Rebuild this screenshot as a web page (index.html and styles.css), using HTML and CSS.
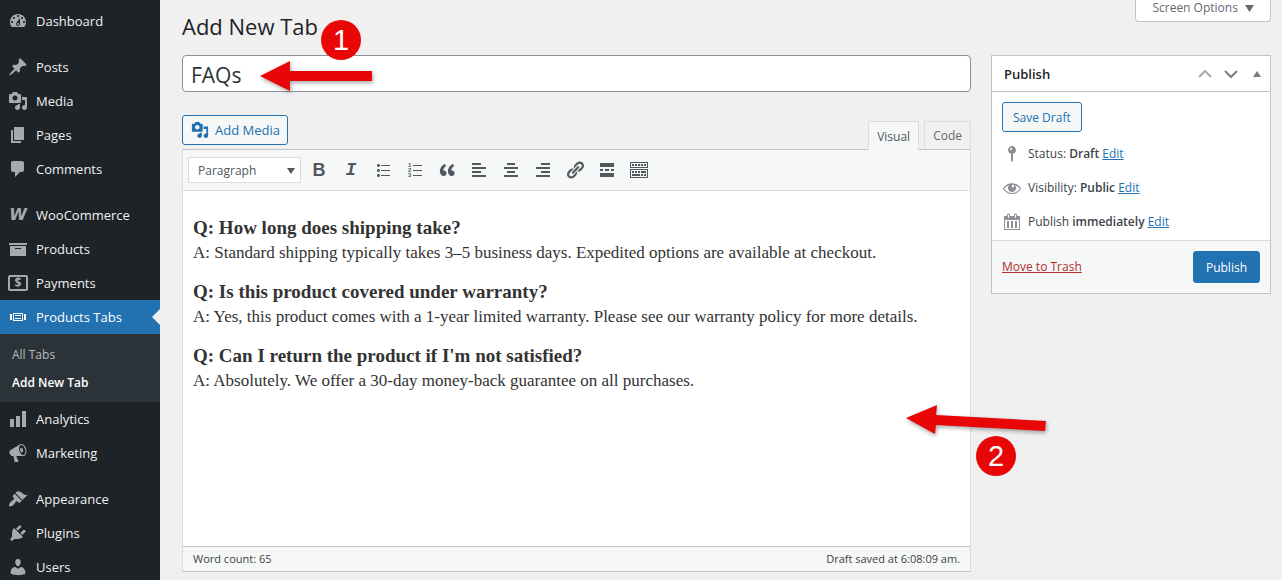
FILE: index.html
```html
<!DOCTYPE html>
<html lang="en">
<head>
  <meta charset="UTF-8">
  <title>Add New Tab</title>
  <link rel="stylesheet" href="styles.css">
</head>
<body>
  <div class="layout">
    <nav class="sidebar">
      <ul class="menu">
        <li><a href="#"><svg class="icon" viewBox="0 0 20 20"><path d="M3.76 16h12.48c1.1-1.37 1.76-3.11 1.76-5 0-4.42-3.58-8-8-8s-8 3.58-8 8c0 1.89.66 3.63 1.76 5zM10 4c.55 0 1 .45 1 1s-.45 1-1 1-1-.45-1-1 .45-1 1-1zM6 6c.55 0 1 .45 1 1s-.45 1-1 1-1-.45-1-1 .45-1 1-1zm8 0c.55 0 1 .45 1 1s-.45 1-1 1-1-.45-1-1 .45-1 1-1zm-5.37 5.55L12 7v6c0 1.1-.9 2-2 2s-2-.9-2-2c0-.57.24-1.08.63-1.45zM4 10c.55 0 1 .45 1 1s-.45 1-1 1-1-.45-1-1 .45-1 1-1zm12 0c.55 0 1 .45 1 1s-.45 1-1 1-1-.45-1-1 .45-1 1-1zm-5 3c0-.55-.45-1-1-1s-1 .45-1 1 .45 1 1 1 1-.45 1-1z"/></svg>Dashboard</a></li>
        <li class="separator"></li>
        <li><a href="#"><svg class="icon" viewBox="0 0 20 20"><path d="M10.44 3.02l1.82-1.82 6.36 6.35-1.83 1.82c-1.05-.68-2.48-.57-3.41.36l-.75.75c-.92.93-1.04 2.35-.35 3.41l-1.83 1.82-2.41-2.41-2.8 2.79c-.42.42-3.38 2.71-3.8 2.29s1.86-3.39 2.28-3.81l2.79-2.79L4.1 9.36l1.83-1.82c1.05.69 2.48.57 3.4-.36l.75-.75c.93-.92 1.05-2.35.36-3.41z"/></svg>Posts</a></li>
        <li><a href="#"><svg class="icon" viewBox="0 0 20 20"><path d="M13 11V4c0-.55-.45-1-1-1h-1.67L9 1H5L3.67 3H2c-.55 0-1 .45-1 1v7c0 .55.45 1 1 1h10c.55 0 1-.45 1-1zM7 4.5c1.38 0 2.5 1.12 2.5 2.5S8.38 9.5 7 9.5 4.5 8.38 4.5 7 5.62 4.5 7 4.5zM14 6h5v10.5c0 1.38-1.12 2.5-2.5 2.5S14 17.88 14 16.5s1.12-2.5 2.5-2.5c.17 0 .34.02.5.05V9h-3V6zm-4 8.05V13h2v3.5c0 1.38-1.12 2.5-2.5 2.5S7 17.88 7 16.5 8.12 14 9.5 14c.17 0 .34.02.5.05z"/></svg>Media</a></li>
        <li><a href="#"><svg class="icon" viewBox="0 0 20 20"><path d="M6 15V2h10v13H6zm-1 1h8v2H3V5h2v11z"/></svg>Pages</a></li>
        <li><a href="#"><svg class="icon" viewBox="0 0 20 20"><path d="M5 2h9c1.1 0 2 .9 2 2v7c0 1.1-.9 2-2 2h-2l-5 5v-5H5c-1.1 0-2-.9-2-2V4c0-1.1.9-2 2-2z"/></svg>Comments</a></li>
        <li class="separator"></li>
        <li><a href="#"><span class="woo">W</span>WooCommerce</a></li>
        <li><a href="#"><svg class="icon" viewBox="0 0 20 20"><path d="M19 4v2H1V4h18zM2 7h16v10H2V7zm11 3V9H7v1h6z"/></svg>Products</a></li>
        <li><a href="#"><span class="pay">$</span>Payments</a></li>
        <li class="current"><a href="#"><svg class="icon" viewBox="0 0 20 20"><path d="M5 14V6h10v8H5zm-3-1V7h2v6H2zm4-6v6h8V7H6zm10 0h2v6h-2V7zm-3 2V8H7v1h6zm0 3v-1H7v1h6z"/></svg>Products Tabs</a>
          <ul class="submenu">
            <li><a href="#">All Tabs</a></li>
            <li><a href="#" class="active">Add New Tab</a></li>
          </ul>
        </li>
        <li><a href="#"><svg class="icon" viewBox="0 0 20 20"><path d="M18 18V2h-4v16h4zm-6 0V7H8v11h4zm-6 0v-8H2v8h4z"/></svg>Analytics</a></li>
        <li><a href="#"><svg class="icon" viewBox="0 0 20 20"><path d="M18.15 5.94c.46 1.62.38 3.22-.02 4.48-.42 1.28-1.26 2.18-2.3 2.48-.16.06-.26.06-.4.06-.06.02-.12.02-.18.02-.06.02-.14.02-.22.02h-6.8l2.22 5.5c.02.14-.06.26-.14.34-.08.1-.24.16-.34.16H6.95c-.1 0-.26-.06-.34-.16-.08-.08-.16-.2-.14-.34l-1-5.5H4.25l-.02-.02c-.5.06-1.08-.18-1.54-.62s-.88-1.08-1.06-1.88c-.24-.8-.2-1.56-.02-2.2.18-.62.58-1.08 1.06-1.3l.02-.02 9-5.4c.1-.06.18-.1.24-.16.06-.04.14-.08.24-.12.16-.08.28-.12.5-.18 1.04-.3 2.24.1 3.22.98s1.84 2.24 2.26 3.86zm-2.58 5.98h-.02c.4-.1.74-.34 1.04-.7.58-.7.86-1.76.86-3.04 0-.64-.1-1.3-.28-1.98-.34-1.36-1.02-2.5-1.78-3.24s-1.68-1.1-2.46-.88c-.82.22-1.4.96-1.7 2-.32 1.04-.28 2.36.06 3.72.38 1.36 1 2.5 1.8 3.24.78.74 1.62 1.1 2.48.88zm-2.54-7.08c.22-.04.42-.02.62.04.38.16.76.48 1.02 1s.42 1.2.42 1.78c0 .3-.04.56-.12.8-.18.48-.44.84-.86.94-.34.1-.8-.06-1.14-.4s-.64-.86-.78-1.5c-.18-.62-.12-1.24.02-1.72s.48-.84.82-.94z"/></svg>Marketing</a></li>
        <li class="separator"></li>
        <li><a href="#"><svg class="icon" viewBox="0 0 20 20"><path d="M14.48 11.06L7.41 3.99l1.5-1.5c.5-.56 2.3-.47 3.51.32 1.21.8 1.43 1.28 2.91 2.1 1.18.64 2.45 1.26 4.45.85zm-.71.71L6.7 4.7 4.93 6.47c-.39.39-.39 1.02 0 1.41l1.06 1.06c.39.39.39 1.03 0 1.42-.6.6-1.43 1.11-2.21 1.69-.35.26-.7.53-1.01.84C1.43 14.23.4 16.08 1.4 17.07c.99 1 2.84-.03 4.18-1.36.31-.31.58-.66.85-1.02.57-.78 1.08-1.61 1.69-2.21.39-.39 1.02-.39 1.41 0l1.06 1.06c.39.39 1.02.39 1.41 0z"/></svg>Appearance</a></li>
        <li><a href="#"><svg class="icon" viewBox="0 0 20 20"><path d="M13.11 4.36L9.87 7.6 8 5.73l3.24-3.24c.35-.34 1.05-.2 1.56.32.52.51.66 1.21.31 1.55zm-8 1.77l.91-1.12 9.01 9.01-1.19.84c-.71.71-2.63 1.16-3.82 1.16H6.14L4.9 17.26c-.59.59-1.54.59-2.12 0-.59-.58-.59-1.53 0-2.12l1.24-1.24v-3.88c0-1.13.4-3.19 1.09-3.89zm7.26 3.97l3.24-3.24c.34-.35 1.04-.21 1.55.31.52.51.66 1.21.31 1.55l-3.24 3.25z"/></svg>Plugins</a></li>
        <li><a href="#"><svg class="icon" viewBox="0 0 20 20"><path d="M10 9.25c-2.27 0-2.73-3.44-2.73-3.44C7 4.02 7.82 2 9.97 2c2.16 0 2.98 2.02 2.71 3.81 0 0-.41 3.44-2.68 3.44zm0 2.57L12.72 10c2.39 0 4.52 2.33 4.52 4.53v2.49s-3.65 1.13-7.24 1.13c-3.65 0-7.24-1.13-7.24-1.13v-2.49c0-2.25 1.94-4.48 4.47-4.48z"/></svg>Users</a></li>
      </ul>
    </nav>

    <main class="content">
      <header class="page-header">
        <h1>Add New Tab</h1>
        <button class="screen-options">Screen Options <svg width="9" height="7" viewBox="0 0 9 7"><path d="M0 0h9L4.500 7z"/></svg></button>
      </header>

      <div class="columns">
        <form class="post">
          <input type="text" class="title" aria-label="Add title" value="FAQs">

          <div class="editor-tools">
            <button type="button" class="button add-media"><svg class="icon" viewBox="0 0 20 20"><path d="M13 11V4c0-.55-.45-1-1-1h-1.67L9 1H5L3.67 3H2c-.55 0-1 .45-1 1v7c0 .55.45 1 1 1h10c.55 0 1-.45 1-1zM7 4.5c1.38 0 2.5 1.12 2.5 2.5S8.38 9.5 7 9.5 4.5 8.38 4.5 7 5.62 4.5 7 4.5zM14 6h5v10.5c0 1.38-1.12 2.5-2.5 2.5S14 17.88 14 16.5s1.12-2.5 2.5-2.5c.17 0 .34.02.5.05V9h-3V6zm-4 8.05V13h2v3.5c0 1.38-1.12 2.5-2.5 2.5S7 17.88 7 16.5 8.12 14 9.5 14c.17 0 .34.02.5.05z"/></svg>Add Media</button>
            <div class="tabs">
              <button type="button" class="tab selected">Visual</button>
              <button type="button" class="tab">Code</button>
            </div>
          </div>

          <div class="editor">
            <div class="toolbar">
              <div class="format">
                <select aria-label="Format">
                  <option>Paragraph</option>
                  <option>Heading 1</option>
                  <option>Heading 2</option>
                  <option>Preformatted</option>
                </select>
              </div>
              <button type="button" class="tool bold" aria-label="Bold">B</button>
              <button type="button" class="tool italic" aria-label="Italic">I</button>
              <button type="button" class="tool" aria-label="Bulleted list"><svg class="icon" viewBox="0 0 20 20"><path d="M5.500 7C4.670 7 4 6.330 4 5.500 4 4.680 4.670 4 5.500 4 6.320 4 7 4.680 7 5.500 7 6.330 6.320 7 5.500 7zM8 5h9v1H8V5zm-2.500 7c-.83 0-1.500-.67-1.500-1.500C4 9.680 4.670 9 5.500 9c.82 0 1.500.68 1.500 1.500 0 .83-.68 1.500-1.500 1.500zM8 10h9v1H8v-1zm-2.500 7c-.83 0-1.500-.67-1.500-1.500 0-.82.67-1.500 1.500-1.500.82 0 1.500.68 1.500 1.500 0 .83-.68 1.500-1.500 1.500zM8 15h9v1H8v-1z"/></svg></button>
              <button type="button" class="tool" aria-label="Numbered list"><svg class="icon" viewBox="0 0 20 20"><path d="M8 5h9v1H8zM8 10h9v1H8zM8 15h9v1H8z"/><text x="3" y="7">1</text><text x="3" y="12">2</text><text x="3" y="17">3</text></svg></button>
              <button type="button" class="tool" aria-label="Blockquote"><svg class="icon" viewBox="0 0 20 20"><path d="M9.490 13.220c0-.74-.2-1.380-.61-1.900-.62-.78-1.830-.88-2.530-.72-.29-1.650 1.110-3.750 2.920-4.650L7.880 4c-2.730 1.300-5.420 4.280-4.960 8.050C3.210 14.430 4.590 16 6.540 16c.85 0 1.560-.25 2.120-.75s.83-1.180.83-2.030zm8.050 0c0-.74-.2-1.380-.61-1.900-.63-.78-1.830-.88-2.530-.72-.29-1.650 1.110-3.750 2.920-4.650L15.930 4c-2.730 1.300-5.410 4.280-4.950 8.050.29 2.380 1.660 3.950 3.610 3.950.85 0 1.560-.25 2.120-.75s.83-1.180.83-2.030z"/></svg></button>
              <button type="button" class="tool" aria-label="Align left"><svg class="icon" viewBox="0 0 20 20"><path d="M12 5V3H3v2h9zm5 4V7H3v2h14zm-5 4v-2H3v2h9zm5 4v-2H3v2h14z"/></svg></button>
              <button type="button" class="tool" aria-label="Align center"><svg class="icon" viewBox="0 0 20 20"><path d="M14 5V3H6v2h8zm3 4V7H3v2h14zm-3 4v-2H6v2h8zm3 4v-2H3v2h14z"/></svg></button>
              <button type="button" class="tool" aria-label="Align right"><svg class="icon" viewBox="0 0 20 20"><path d="M17 5V3H8v2h9zm0 4V7H3v2h14zm0 4v-2H8v2h9zm0 4v-2H3v2h14z"/></svg></button>
              <button type="button" class="tool" aria-label="Insert link"><svg class="icon" viewBox="0 0 20 20"><path d="M17.740 2.760c1.680 1.690 1.680 4.410 0 6.100l-1.530 1.520c-1.120 1.120-2.700 1.470-4.140 1.090l2.620-2.610.76-.77.76-.76c.84-.84.84-2.200 0-3.040-.84-.85-2.200-.85-3.040 0l-.77.76-3.380 3.380c-.37-1.440-.02-3.020 1.100-4.140l1.520-1.530c1.690-1.680 4.420-1.680 6.100 0zM8.590 13.430l5.340-5.340c.42-.42.42-1.100 0-1.520-.44-.43-1.130-.39-1.530 0l-5.330 5.340c-.42.42-.42 1.100 0 1.520.44.43 1.130.39 1.520 0zm-.76 2.290l4.140-4.150c.38 1.440.03 3.020-1.090 4.140l-1.520 1.530c-1.690 1.680-4.410 1.680-6.100 0-1.680-1.680-1.680-4.420 0-6.100l1.530-1.520c1.120-1.120 2.700-1.470 4.140-1.100l-4.140 4.150c-.85.84-.85 2.200 0 3.050.84.84 2.200.84 3.040 0z"/></svg></button>
              <button type="button" class="tool" aria-label="Read more"><svg class="icon" viewBox="0 0 20 20"><path d="M17 7V3H3v4h14zM6 11V9H3v2h3zm6 0V9H8v2h4zm5 0V9h-3v2h3zm0 6v-4H3v4h14z"/></svg></button>
              <button type="button" class="tool" aria-label="Toolbar toggle"><svg class="icon" viewBox="0 0 20 20"><path d="M19 2v6H1V2h18zm-1 5V3H2v4h16zM5 4v2H3V4h2zm3 0v2H6V4h2zm3 0v2H9V4h2zm3 0v2h-2V4h2zm3 0v2h-2V4h2zm2 5v9H1V9h18zm-1 8v-7H2v7h16zM5 11v2H3v-2h2zm3 0v2H6v-2h2zm3 0v2H9v-2h2zm6 0v2h-5v-2h5zm-6 3v2H3v-2h8zm3 0v2h-2v-2h2zm3 0v2h-2v-2h2z"/></svg></button>
            </div>

            <div class="editor-body" contenteditable="true" spellcheck="false">
              <p><strong>Q: How long does shipping take?</strong><br>A: Standard shipping typically takes 3–5 business days. Expedited options are available at checkout.</p>
              <p><strong>Q: Is this product covered under warranty?</strong><br>A: Yes, this product comes with a 1-year limited warranty. Please see our warranty policy for more details.</p>
              <p><strong>Q: Can I return the product if I'm not satisfied?</strong><br>A: Absolutely. We offer a 30-day money-back guarantee on all purchases.</p>
            </div>

            <div class="status-bar">
              <span>Word count: 65</span>
              <span>Draft saved at 6:08:09 am.</span>
            </div>
          </div>
        </form>

        <aside class="postbox">
          <div class="postbox-header">
            <h2>Publish</h2>
            <button class="handle muted" aria-label="Move up"><svg width="14" height="8" viewBox="0 0 14 8"><path d="M1 7l6-6 6 6"/></svg></button>
            <button class="handle" aria-label="Move down"><svg width="14" height="8" viewBox="0 0 14 8"><path d="M1 1l6 6 6-6"/></svg></button>
            <button class="handle toggle" aria-label="Toggle panel"><svg width="8" height="6" viewBox="0 0 8 6"><path d="M0 6h8L4 0z"/></svg></button>
          </div>
          <div class="publish-body">
            <button class="button">Save Draft</button>
            <ul class="publish-list">
              <li><svg class="icon" viewBox="0 0 20 20"><path d="M14 6c0 1.860-1.280 3.410-3 3.860V16c0 1-2 2-2 2V9.860c-1.720-.45-3-2-3-3.860 0-2.210 1.790-4 4-4s4 1.790 4 4zM8 5c0 .55.45 1 1 1s1-.45 1-1-.45-1-1-1-1 .45-1 1z"/></svg><span>Status: <b>Draft</b> <a href="#">Edit</a></span></li>
              <li><svg class="icon" viewBox="0 0 20 20"><path d="M18.300 9.500C15 4.900 8.500 3.800 3.900 7.200c-1.200.9-2.200 2.100-3 3.400.2.4.5.8.8 1.200 3.300 4.600 9.600 5.600 14.200 2.400.9-.7 1.700-1.400 2.400-2.400.3-.4.5-.8.8-1.200-.3-.4-.5-.8-.8-1.100zm-8.200-2.300c.5-.5 1.300-.5 1.800 0s.5 1.300 0 1.800-1.300.5-1.800 0-.5-1.300 0-1.800zm-.1 7.700c-3.100 0-6-1.600-7.700-4.200C3.500 9 5.100 7.800 7 7.200c-.7.800-1 1.700-1 2.700 0 2.200 1.700 4.100 4 4.100 2.200 0 4.100-1.700 4.100-4v-.1c0-1-.4-2-1.100-2.700 1.900.6 3.500 1.800 4.700 3.500-1.700 2.600-4.600 4.200-7.700 4.200z"/></svg><span>Visibility: <b>Public</b> <a href="#">Edit</a></span></li>
              <li><svg class="icon" viewBox="0 0 20 20"><path d="M15 4h3v14H2V4h3V3c0-.83.67-1.500 1.500-1.500S8 2.170 8 3v1h4V3c0-.83.67-1.500 1.500-1.500S15 2.170 15 3v1zM6 3v2.500c0 .28.22.5.5.5s.5-.22.5-.5V3c0-.28-.22-.5-.5-.5S6 2.720 6 3zm7 0v2.500c0 .28.22.5.5.5s.5-.22.5-.5V3c0-.28-.22-.5-.5-.5s-.5.22-.5.5zm4 14V8H3v9h14zM7 16V9H5v7h2zm4 0V9H9v7h2zm4 0V9h-2v7h2z"/></svg><span>Publish <b>immediately</b> <a href="#">Edit</a></span></li>
            </ul>
          </div>
          <div class="publish-footer">
            <a href="#" class="trash">Move to Trash</a>
            <button class="button primary">Publish</button>
          </div>
        </aside>
      </div>
    </main>
  </div>

  <!-- walkthrough markers over the screen -->
  <svg class="arrow arrow-one" width="112" height="30" viewBox="0 0 112 30"><path d="M0 15L30 0v10h82v10H30v10z"/></svg>
  <span class="step step-one">1</span>
  <svg class="arrow arrow-two" width="141" height="30" viewBox="0 0 141 30"><path d="M0 13L31 0l-1 10 110 6-1 10-109-6-1 9z"/></svg>
  <span class="step step-two">2</span>
</body>
</html>
```

FILE: styles.css
```css
* {
  box-sizing: border-box;
}

body {
  margin: 0;
  background: #f0f0f1;
  color: #3c434a;
  font-family: "Open Sans", "Noto Sans", sans-serif;
  font-size: 12px;
  line-height: 18px;
}

ul {
  list-style: none;
  margin: 0;
  padding: 0;
}

button, input, select {
  font-family: inherit;
  font-size: 12px;
  cursor: pointer;
}

.icon {
  width: 20px;
  height: 20px;
  flex: none;
  fill: currentColor;
}

.layout {
  display: flex;
  height: 100vh;
  overflow: hidden;
}

/* sidebar */
.sidebar {
  width: 160px;
  flex: none;
  padding-top: 4px;
  background: #1d2327;
}

.menu a {
  display: flex;
  align-items: center;
  height: 34px;
  padding-left: 8px;
  gap: 8px;
  color: #f0f0f1;
  font-size: 13px;
  text-decoration: none;
}

.menu .icon {
  color: #a7aaad;
}

.menu .separator {
  height: 12px;
}

.woo {
  width: 20px;
  color: #a7aaad;
  font-family: "DejaVu Sans", sans-serif;
  font-size: 16px;
  font-style: italic;
  font-weight: bold;
  text-align: center;
}

.pay {
  width: 20px;
  height: 16px;
  border: 2px solid #a7aaad;
  border-radius: 2px;
  color: #a7aaad;
  font-size: 12px;
  font-weight: bold;
  line-height: 12px;
  text-align: center;
}

.menu .current > a {
  position: relative;
  background: #2271b1;
  color: #fff;
}

.current > a .icon {
  color: #fff;
}

.current > a::after {
  content: "";
  position: absolute;
  right: 0;
  top: 9px;
  border: 8px solid transparent;
  border-left: 0;
  border-right-color: #f0f0f1;
}

.submenu {
  padding: 7px 0 5px;
  background: #2c3338;
}

.submenu a {
  height: 28px;
  padding-left: 12px;
  color: #b4b9be;
  font-size: 12px;
}

.submenu a.active {
  color: #fff;
  font-weight: 600;
}

/* main area */
.content {
  flex: 1;
  min-width: 0;
  padding: 0 11px 0 22px;
}

.page-header {
  display: flex;
  justify-content: space-between;
  align-items: flex-start;
  height: 55px;
}

h1 {
  margin: 0;
  padding-top: 11px;
  color: #1d2327;
  font-size: 22px;
  font-weight: 400;
  line-height: 30px;
}

.screen-options {
  height: 22px;
  padding: 0 16px 6px;
  border: 1px solid #c3c4c7;
  border-top: 0;
  border-radius: 0 0 4px 4px;
  background: #fff;
  color: #646970;
  line-height: 15px;
}

.screen-options svg {
  margin-left: 4px;
  fill: #646970;
}

.columns {
  display: flex;
  align-items: flex-start;
  gap: 20px;
}

.post {
  flex: 1;
  min-width: 0;
}

.title {
  display: block;
  width: 100%;
  height: 37px;
  padding: 2px 8px 0;
  border: 1px solid #8c8f94;
  border-radius: 4px;
  background: #fff;
  color: #2c3338;
  font-size: 21px;
}

.button {
  height: 30px;
  padding: 0 10px;
  border: 1px solid #2271b1;
  border-radius: 3px;
  background: #f6f7f7;
  color: #2271b1;
}

.primary {
  height: 32px;
  padding: 0 12px;
  background: #2271b1;
  color: #fff;
}

.editor-tools {
  display: flex;
  justify-content: space-between;
  align-items: flex-start;
  padding-top: 23px;
}

.add-media {
  display: flex;
  align-items: center;
  gap: 6px;
  padding: 0 7px 0 8px;
  font-size: 13px;
}

.add-media .icon {
  width: 18px;
}

.tabs {
  display: flex;
  gap: 5px;
  padding-top: 6px;
}

.tab {
  height: 28px;
  padding: 0 8px;
  border: 1px solid #dcdcde;
  border-bottom: 0;
  background: #f0f0f1;
  color: #646970;
}

.tab.selected {
  position: relative;
  height: 29px;
  background: #f6f7f7;
  color: #50575e;
}

.editor {
  margin-top: -1px;
  border: 1px solid #dcdcde;
  border-top-color: #c3c4c7;
  border-bottom-color: #c3c4c7;
  background: #fff;
}

.toolbar {
  display: flex;
  align-items: center;
  gap: 4px;
  height: 41px;
  padding: 0 5px;
  border-bottom: 1px solid #dcdcde;
  background: #f6f7f7;
}

.format {
  position: relative;
}

.format::after {
  content: "";
  position: absolute;
  right: 6px;
  top: 11px;
  border: 4px solid transparent;
  border-top: 6px solid #50575e;
  border-bottom: 0;
  pointer-events: none;
}

.format select {
  display: block;
  appearance: none;
  width: 113px;
  height: 26px;
  padding: 0 9px;
  border: 1px solid #dcdcde;
  border-radius: 0;
  background: #fff;
  color: #50575e;
}

.tool {
  display: flex;
  align-items: center;
  justify-content: center;
  width: 28px;
  height: 28px;
  padding: 0;
  border: 0;
  background: none;
  color: #50575e;
}

.tool text {
  font: bold 6px "Liberation Sans", sans-serif;
}

.bold {
  font: bold 18px "Liberation Sans", sans-serif;
}

.italic {
  font: italic bold 18px "Liberation Mono", monospace;
}

.editor-body {
  height: 355px;
  padding: 10px;
  outline: 0;
  color: #333;
  font-family: Georgia, "Liberation Serif", serif;
  font-size: 17px;
  line-height: 24px;
}

.editor-body p {
  margin: 16px 0;
}

.editor-body strong {
  font-size: 19px;
  line-height: 20px;
}

.status-bar {
  display: flex;
  justify-content: space-between;
  padding: 3px 10px;
  border-top: 1px solid #c3c4c7;
  background: #f6f7f7;
  font-size: 11px;
}

/* publish box */
.postbox {
  width: 280px;
  flex: none;
  border: 1px solid #c3c4c7;
  background: #fff;
}

.postbox-header {
  display: flex;
  align-items: center;
  height: 36px;
  padding-left: 12px;
  border-bottom: 1px solid #c3c4c7;
}

h2 {
  flex: 1;
  margin: 0;
  color: #1d2327;
  font-size: 13px;
  font-weight: 600;
}

.handle {
  display: flex;
  align-items: center;
  justify-content: center;
  width: 26px;
  height: 35px;
  padding: 0;
  border: 0;
  background: none;
}

.handle path {
  fill: none;
  stroke: #787c82;
  stroke-width: 2;
}

.muted path {
  stroke: #a7aaad;
}

.toggle path {
  fill: #787c82;
  stroke: none;
}

.publish-body {
  padding: 10px 10px 1px;
}

.publish-list {
  padding-top: 5px;
}

.publish-list li {
  display: flex;
  align-items: center;
  gap: 6px;
  height: 34px;
}

.publish-list .icon {
  color: #8c8f94;
}

b {
  font-weight: 600;
}

.publish-list a {
  color: #2271b1;
}

.publish-footer {
  display: flex;
  align-items: center;
  justify-content: space-between;
  padding: 10px;
  border-top: 1px solid #dcdcde;
  background: #f6f7f7;
}

.trash {
  color: #b32d2e;
}

/* walkthrough markers */
.arrow {
  position: absolute;
  overflow: visible;
  fill: #e90606;
  filter: drop-shadow(1px 2px 2px rgba(0, 0, 0, 0.35));
}

.arrow-one {
  left: 260px;
  top: 61px;
}

.arrow-two {
  left: 906px;
  top: 405px;
}

.step {
  position: absolute;
  width: 40px;
  height: 40px;
  border-radius: 50%;
  background: #e90606;
  color: #fff;
  font-family: "Liberation Sans", sans-serif;
  font-size: 29px;
  line-height: 41px;
  text-align: center;
}

.step-one {
  left: 321px;
  top: 20px;
}

.step-two {
  left: 976px;
  top: 436px;
}
```
